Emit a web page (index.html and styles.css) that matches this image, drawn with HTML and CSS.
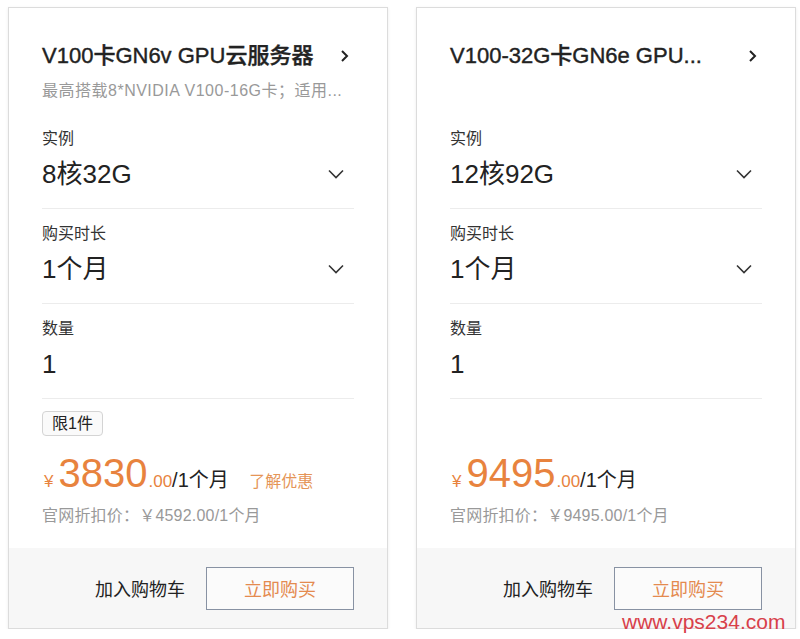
FILE: index.html
```html
<!DOCTYPE html>
<html lang="zh-CN">
<head>
    <meta charset="UTF-8">
    <meta name="viewport" content="width=device-width, initial-scale=1.0">
    <title>GPU云服务器</title>
    <link rel="stylesheet" href="styles.css">
</head>
<body>
    <div class="page">
        <div class="card">
            <div class="head">
                <div class="title-row">
                    <span class="title">V100卡GN6v GPU云服务器</span>
                    <svg class="arrow" width="10" height="14" viewBox="0 0 10 14"><path d="M2 2l5 5-5 5" fill="none" stroke="#222" stroke-width="2"/></svg>
                </div>
                <div class="subtitle">最高搭载8*NVIDIA V100-16G卡；适用...</div>
            </div>

            <div class="field">
                <div class="label">实例</div>
                <div class="value">8核32G
                    <svg class="down" width="16" height="10" viewBox="0 0 16 10"><path d="M1 1.5l7 7 7-7" fill="none" stroke="#333" stroke-width="1.6"/></svg>
                </div>
            </div>
            <div class="field">
                <div class="label">购买时长</div>
                <div class="value">1个月
                    <svg class="down" width="16" height="10" viewBox="0 0 16 10"><path d="M1 1.5l7 7 7-7" fill="none" stroke="#333" stroke-width="1.6"/></svg>
                </div>
            </div>
            <div class="field">
                <div class="label">数量</div>
                <div class="value">1</div>
            </div>

            <div class="promo"><span class="tag">限1件</span></div>
            <div class="price">
                <span class="yen">¥</span><span class="num">3830</span><span class="cents">.00</span><span class="unit">/1个月</span>
                <a href="#" class="deal">了解优惠</a>
            </div>
            <div class="list-price">官网折扣价：￥4592.00/1个月</div>

            <div class="foot">
                <span class="cart">加入购物车</span>
                <button class="buy">立即购买</button>
            </div>
        </div>

        <div class="card">
            <div class="head">
                <div class="title-row">
                    <span class="title">V100-32G卡GN6e GPU...</span>
                    <svg class="arrow" width="10" height="14" viewBox="0 0 10 14"><path d="M2 2l5 5-5 5" fill="none" stroke="#222" stroke-width="2"/></svg>
                </div>
                <div class="subtitle"></div>
            </div>

            <div class="field">
                <div class="label">实例</div>
                <div class="value">12核92G
                    <svg class="down" width="16" height="10" viewBox="0 0 16 10"><path d="M1 1.5l7 7 7-7" fill="none" stroke="#333" stroke-width="1.6"/></svg>
                </div>
            </div>
            <div class="field">
                <div class="label">购买时长</div>
                <div class="value">1个月
                    <svg class="down" width="16" height="10" viewBox="0 0 16 10"><path d="M1 1.5l7 7 7-7" fill="none" stroke="#333" stroke-width="1.6"/></svg>
                </div>
            </div>
            <div class="field">
                <div class="label">数量</div>
                <div class="value">1</div>
            </div>

            <div class="promo"></div>
            <div class="price">
                <span class="yen">¥</span><span class="num">9495</span><span class="cents">.00</span><span class="unit">/1个月</span>
            </div>
            <div class="list-price">官网折扣价：￥9495.00/1个月</div>

            <div class="foot">
                <span class="cart">加入购物车</span>
                <button class="buy">立即购买</button>
            </div>
        </div>
    </div>

    <div class="watermark">www.vps234.com</div>
</body>
</html>
```

FILE: styles.css
```css
body {
    font-family: "Liberation Sans", "Noto Sans CJK SC", sans-serif;
    background-color: #fff;
    color: #222;
    margin: 0;
    padding: 0;
}

.page {
    display: flex;
    gap: 28px;
    padding: 7px 0 0 8px;
}

.card {
    box-sizing: border-box;
    width: 380px;
    height: 622px;
    border: 1px solid #dcdcdc;
    box-shadow: 0 1px 3px rgba(0, 0, 0, 0.08);
    background: #fff;
    display: flex;
    flex-direction: column;
}

.head {
    padding: 34px 33px 12px;
}

.title-row {
    display: flex;
    align-items: center;
    justify-content: space-between;
    height: 28px;
}

.title {
    font-size: 22px;
    font-weight: 500;
    line-height: 28px;
    white-space: nowrap;
    -webkit-text-stroke: 0.4px #222;
}

.arrow {
    margin-right: 4px;
    flex: none;
}

.subtitle {
    margin-top: 10px;
    height: 22px;
    font-size: 16px;
    line-height: 22px;
    letter-spacing: 0.5px;
    color: #999;
    white-space: nowrap;
}

.field {
    margin: 0 33px;
    padding: 14px 0 18px;
    border-bottom: 1px solid #ececec;
}

.label {
    font-size: 16px;
    line-height: 22px;
    color: #333;
}

.value {
    margin-top: 8px;
    font-size: 26px;
    line-height: 32px;
    display: flex;
    align-items: center;
    justify-content: space-between;
}

.down {
    margin-right: 10px;
}

.promo {
    margin: 12px 33px 0;
    height: 25px;
}

.tag {
    display: inline-block;
    box-sizing: border-box;
    height: 25px;
    line-height: 23px;
    padding: 0 9px;
    font-size: 16px;
    border: 1px solid #d4d4d4;
    border-radius: 4px;
    background: #fafafa;
}

.price {
    margin: 15px 33px 0;
    line-height: 44px;
    white-space: nowrap;
}

.yen {
    font-size: 17px;
    color: #e8833e;
    margin-left: 2px;
    margin-right: 5px;
}

.num {
    font-size: 40px;
    color: #e8833e;
}

.cents {
    font-size: 17px;
    color: #e8833e;
    margin-left: 1px;
}

.unit {
    font-size: 20px;
    color: #222;
}

.deal {
    margin-left: 16px;
    font-size: 16px;
    color: #e59557;
    text-decoration: none;
}

.list-price {
    margin: 2px 33px 0;
    font-size: 16px;
    line-height: 20px;
    letter-spacing: 0.2px;
    color: #999;
}

.foot {
    margin-top: auto;
    height: 80px;
    background: #f7f7f7;
    display: flex;
    align-items: center;
    justify-content: flex-end;
    gap: 21px;
    padding-right: 33px;
}

.cart {
    font-size: 18px;
    color: #222;
}

.buy {
    width: 148px;
    height: 43px;
    border: 1px solid #8892a3;
    background: #fbfbfb;
    color: #e48a4f;
    font-family: inherit;
    font-size: 18px;
    cursor: pointer;
}

.watermark {
    position: absolute;
    top: 609px;
    left: 622px;
    font-size: 21px;
    line-height: 26px;
    color: #d8404a;
}
```
